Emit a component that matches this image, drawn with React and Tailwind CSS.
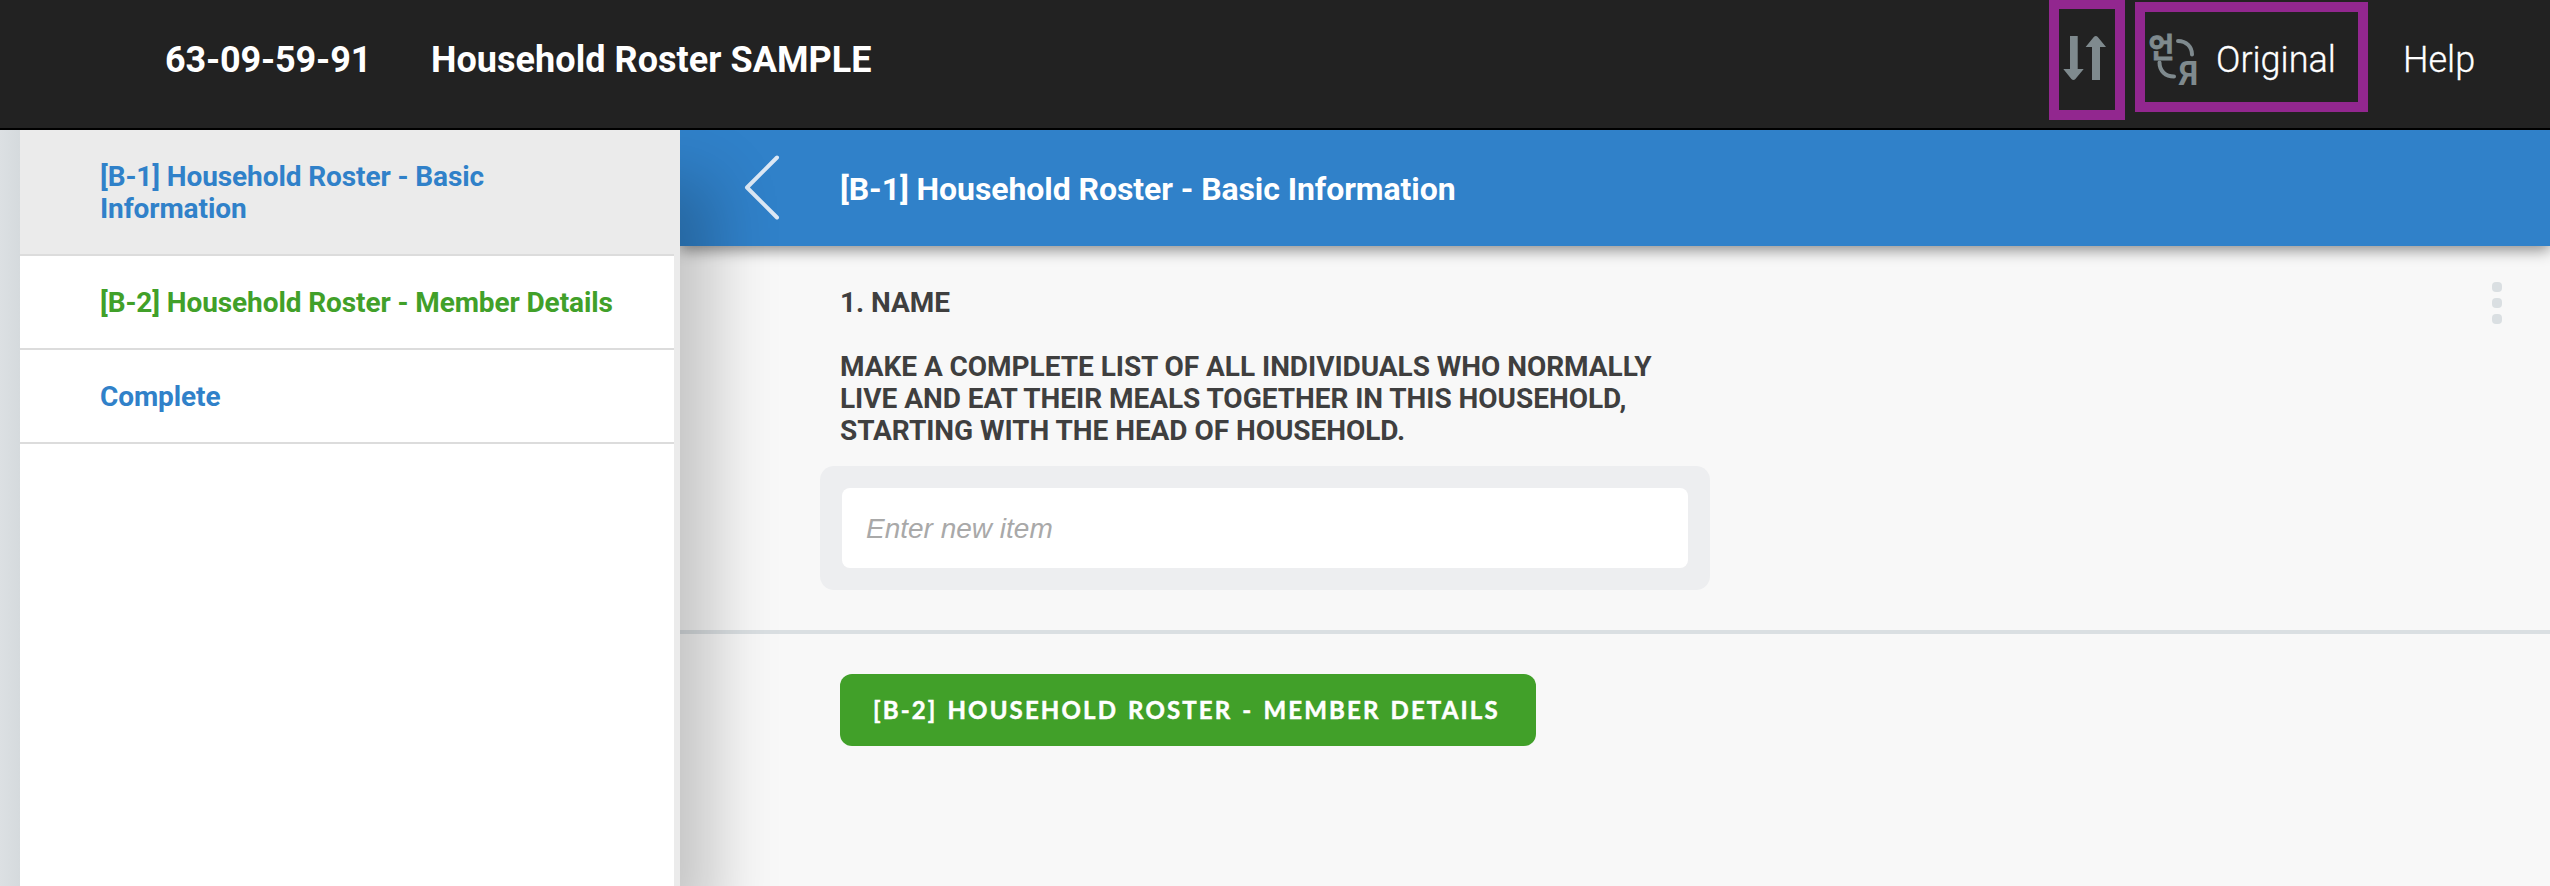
const navItems = [
  { label: "[B-1] Household Roster - Basic Information", className: "bg-[#ebebeb] text-[#3081c9]" },
  { label: "[B-2] Household Roster - Member Details", className: "text-[#41a029]" },
  { label: "Complete", className: "text-[#3081c9]" },
];

function SyncIcon() {
  return (
    <svg width="44" height="44" viewBox="0 0 44 44" fill="#7f8a8e">
      <path d="M7 0h7.7v33h6L12.4 43a3 3 0 0 1-4 0L.3 33H7z" />
      <path d="M29 44h8V11h6L34.8 1a3 3 0 0 0-4 0L22.6 11H29z" />
    </svg>
  );
}

function TranslateIcon() {
  return (
    <svg width="56" height="76" viewBox="-2 -6 56 76" fill="#7f8a8e">
      <text x="0.500" y="29.500" fontSize="28" fontWeight="700" stroke="#7f8a8e" strokeWidth="0.800" fontFamily="'Noto Sans CJK KR', sans-serif">언</text>
      <text x="31" y="57" fontSize="34" fontWeight="700" textLength="19" lengthAdjust="spacingAndGlyphs" fontFamily="Roboto, sans-serif">Я</text>
      <g fill="none" stroke="#7f8a8e" strokeWidth="4" strokeLinecap="round">
        <path d="M30 13c8.500 0 14 6 14 13.500" />
        <path d="M11.500 34.500c0 8.500 6 14 14.500 14" />
      </g>
    </svg>
  );
}

function Header() {
  return (
    <header className="relative z-30 flex h-[130px] shrink-0 items-center border-b-2 border-black bg-[#222222] pb-2 text-[36px] leading-[42px] text-white">
      <div className="ml-[165px] w-[266px] font-bold tracking-[-0.15px]">63-09-59-91</div>
      <div className="font-bold tracking-[0.05px]">Household Roster SAMPLE</div>
      <div className="ml-auto flex w-[487px] items-center">
        <div className="-mt-1 mr-[39px]"><SyncIcon /></div>
        <div className="mr-[14px]"><TranslateIcon /></div>
        <div className="w-[187px] font-light [-webkit-text-stroke:0.3px_white]">Original</div>
        <div className="font-light [-webkit-text-stroke:0.3px_white]">Help</div>
      </div>
      <div className="absolute -top-px left-[2049px] h-[121px] w-[76px] border-10 border-[#92278f]" />
      <div className="absolute left-[2135px] top-[2px] h-[110px] w-[233px] border-10 border-[#92278f]" />
    </header>
  );
}

function Sidebar() {
  return (
    <div className="relative z-20 flex w-[680px] shrink-0 bg-[#ebebeb] shadow-[34px_50px_60px_rgba(0,0,0,0.21)]">
      <div className="w-5 shrink-0 bg-linear-to-r from-[#dce0e3] to-[#d5dadd]" />
      <nav className="w-[654px] bg-white text-[28px] font-bold leading-8 tracking-[-0.1px]">
        {navItems.map((item) => (
          <div key={item.label} className={`border-b-2 border-[#dcdcdc] pb-[29px] pl-20 pr-[50px] pt-[31px] ${item.className}`}>
            {item.label}
          </div>
        ))}
      </nav>
    </div>
  );
}

function Main() {
  return (
    <main className="flex min-w-0 flex-1 flex-col bg-[#f8f8f8]">
      <div className="relative flex h-[116px] shrink-0 items-center bg-[#3081c9] shadow-[0_4px_14px_rgba(0,0,0,0.45)]">
        <svg className="ml-[64px] mr-[60px]" width="36" height="66" viewBox="0 0 36 66" fill="none" stroke="#dce8f5" strokeWidth="4">
          <path d="M33 2.500 3 32.500 33 62.500" strokeLinecap="round" strokeLinejoin="round" />
        </svg>
        <h1 className="pt-[2px] text-[32px] font-bold leading-9 tracking-[-0.08px] text-white">[B-1] Household Roster - Basic Information</h1>
      </div>
      <section className="flex h-[388px] shrink-0 justify-between border-b-4 border-[#dadfe2] pl-[140px] pt-[36px]">
        <div className="w-[890px] pt-[5px]">
          <div className="pl-5 text-[28px] font-bold leading-8 tracking-[-0.04px] text-[#3f3f3f]">
            <p className="mb-8">1. NAME</p>
            <p className="whitespace-nowrap">
              MAKE A COMPLETE LIST OF ALL INDIVIDUALS WHO NORMALLY
              <br />
              LIVE AND EAT THEIR MEALS TOGETHER IN THIS HOUSEHOLD,
              <br />
              STARTING WITH THE HEAD OF HOUSEHOLD.
            </p>
          </div>
          <div className="mt-[19px] rounded-[14px] bg-[#edeef0] p-[22px]">
            <div className="flex h-20 items-center rounded-lg bg-white px-6 pt-px font-['Liberation_Sans',sans-serif] text-[28px] italic leading-8 text-[#a9a9a9]">
              Enter new item
            </div>
          </div>
        </div>
        <div className="mr-[48px] flex flex-col gap-1.5">
          <span className="size-2.5 rounded-[4px] bg-[#dadfe2]" />
          <span className="size-2.5 rounded-[4px] bg-[#dadfe2]" />
          <span className="size-2.5 rounded-[4px] bg-[#dadfe2]" />
        </div>
      </section>
      <div className="pl-40 pt-10">
        <button className="flex h-[72px] w-[696px] items-center whitespace-nowrap rounded-xl bg-[#41a029] pb-px pl-[33px] font-['Lato',sans-serif] text-[24px] font-bold tracking-[2.15px] text-white [-webkit-text-stroke:0.5px_white] [word-spacing:2px]">
          [B-2] HOUSEHOLD ROSTER - MEMBER DETAILS
        </button>
      </div>
    </main>
  );
}

export default function App() {
  return (
    <div className="flex h-[886px] w-[2550px] flex-col overflow-hidden font-['Roboto',sans-serif]">
      <Header />
      <div className="flex min-h-0 flex-1">
        <Sidebar />
        <Main />
      </div>
    </div>
  );
}
